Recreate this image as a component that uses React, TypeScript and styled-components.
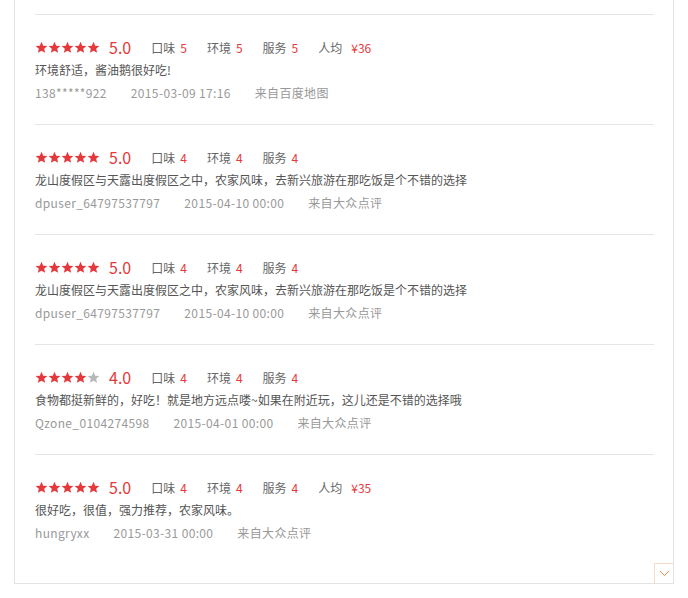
import React from 'react'
import styled, { createGlobalStyle } from 'styled-components'

const GlobalStyle = createGlobalStyle`
    body {
        margin: 0;
        background: #ffffff;
        font-family: "Microsoft YaHei", "Noto Sans CJK SC", sans-serif;
    }
`

type Review = {
    score: number
    taste: number
    env: number
    service: number
    price?: string
    text: string
    user: string
    time: string
    source: string
}

const reviews: Review[] = [
    { score: 5, taste: 5, env: 5, service: 5, price: '¥36', text: '环境舒适，酱油鹅很好吃!', user: '138*****922', time: '2015-03-09 17:16', source: '来自百度地图' },
    { score: 5, taste: 4, env: 4, service: 4, text: '龙山度假区与天露出度假区之中，农家风味，去新兴旅游在那吃饭是个不错的选择', user: 'dpuser_64797537797', time: '2015-04-10 00:00', source: '来自大众点评' },
    { score: 5, taste: 4, env: 4, service: 4, text: '龙山度假区与天露出度假区之中，农家风味，去新兴旅游在那吃饭是个不错的选择', user: 'dpuser_64797537797', time: '2015-04-10 00:00', source: '来自大众点评' },
    { score: 4, taste: 4, env: 4, service: 4, text: '食物都挺新鲜的，好吃！就是地方远点喽~如果在附近玩，这儿还是不错的选择哦', user: 'Qzone_0104274598', time: '2015-04-01 00:00', source: '来自大众点评' },
    { score: 5, taste: 4, env: 4, service: 4, price: '¥35', text: '很好吃，很值，强力推荐，农家风味。', user: 'hungryxx', time: '2015-03-31 00:00', source: '来自大众点评' },
]

const Panel = styled.div`
    position: relative;
    margin-left: 14px;
    width: 660px;
    padding: 14px 19px 19px 20px;
    box-sizing: border-box;
    border: 1px solid #e3e3e3;
    border-top: none;
`

const Item = styled.div`
    border-top: 1px solid #e5e5e5;
    padding: 21px 0 20px;
    &:last-child {
        padding-bottom: 18px;
    }
`

const RatingRow = styled.div`
    display: flex;
    align-items: center;
    height: 22px;
`

const Stars = styled.div`
    display: flex;
    gap: 0;
`

const Score = styled.span`
    margin-left: 9px;
    margin-right: 20px;
    font-size: 16px;
    color: #e4393c;
`

const Label = styled.span`
    font-size: 12px;
    color: #666666;
    margin-right: 20px;
`

const Num = styled.span<{ gap?: number }>`
    color: #e4393c;
    margin-left: ${({ gap }) => gap ?? 5}px;
`

const Comment = styled.div`
    margin-top: 1px;
    font-size: 12px;
    line-height: 22px;
    color: #555555;
`

const Meta = styled.div`
    margin-top: 1px;
    display: flex;
    gap: 24px;
    font-size: 12px;
    line-height: 22px;
    letter-spacing: 0.35px;
    color: #999999;
`

const MoreButton = styled.div`
    position: absolute;
    right: 0;
    bottom: 0;
    width: 18px;
    height: 19px;
    border-left: 1px solid #f3dcc8;
    border-top: 1px solid #f3dcc8;
    display: flex;
    align-items: center;
    justify-content: center;
`

const Star: React.FC<{ on: boolean }> = ({ on }) => (
    <svg width="13" height="13" viewBox="0 0 24 24">
        <path
            d="M12 1.5l3.1 7.1 7.7.6-5.9 5.1 1.8 7.5L12 17.8l-6.7 4 1.8-7.5-5.9-5.1 7.7-.6z"
            fill={on ? '#e4393c' : '#b8b8b8'}
        />
    </svg>
)

const App: React.FunctionComponent = () => {
    return (
        <>
            <GlobalStyle />
            <Panel>
                {reviews.map((r, index) => (
                    <Item key={index}>
                        <RatingRow>
                            <Stars>
                                {[0, 1, 2, 3, 4].map(i => <Star key={i} on={i < r.score} />)}
                            </Stars>
                            <Score>{r.score.toFixed(1)}</Score>
                            <Label>口味<Num>{r.taste}</Num></Label>
                            <Label>环境<Num>{r.env}</Num></Label>
                            <Label>服务<Num>{r.service}</Num></Label>
                            {r.price && <Label>人均<Num gap={9}>{r.price}</Num></Label>}
                        </RatingRow>
                        <Comment>{r.text}</Comment>
                        <Meta>
                            <span>{r.user}</span>
                            <span>{r.time}</span>
                            <span>{r.source}</span>
                        </Meta>
                    </Item>
                ))}
                <MoreButton>
                    <svg width="11" height="7" viewBox="0 0 11 7">
                        <path d="M1 1l4.5 4.5L10 1" stroke="#f08c44" strokeWidth="1" fill="none" />
                    </svg>
                </MoreButton>
            </Panel>
        </>
    )
}

export default App
